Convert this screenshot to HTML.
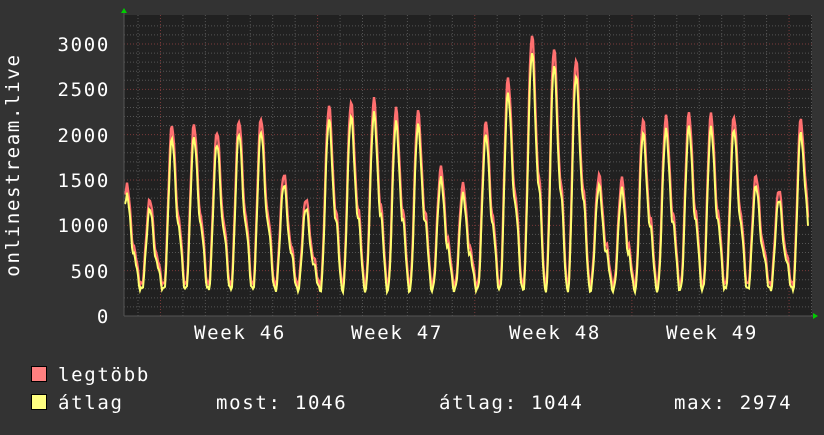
<!DOCTYPE html>
<html><head><meta charset="utf-8"><style>
html,body{margin:0;padding:0;background:#333;}
body{width:824px;height:430px;overflow:hidden;}
svg text{font-family:"DejaVu Sans Mono","Liberation Mono",monospace;fill:#fff;letter-spacing:1.7px;}
</style></head><body>
<svg id="g" width="824" height="430" xmlns="http://www.w3.org/2000/svg">
<rect width="824" height="430" fill="#333"/>
<rect x="124" y="15" width="688" height="301" fill="#212121"/>
<g id="grid"></g>
<g id="data"></g>
<line x1="124" y1="316" x2="816" y2="316" stroke="#555" stroke-width="1"/>
<line x1="124" y1="12" x2="124" y2="316" stroke="#555" stroke-width="1"/>
<polygon points="121,13 127,13 124,8" fill="#0c0"/>
<polygon points="813,313 813,319 818,316" fill="#0c0"/>
<g font-size="19" text-anchor="end">
<text x="110" y="323">0</text>
<text x="110" y="278">500</text>
<text x="110" y="232">1000</text>
<text x="110" y="187">1500</text>
<text x="110" y="142">2000</text>
<text x="110" y="96">2500</text>
<text x="110" y="51">3000</text>
</g>
<text transform="translate(19,165) rotate(-90)" font-size="19" text-anchor="middle">onlinestream.live</text>
<g font-size="19" text-anchor="middle">
<text x="240" y="339">Week 46</text>
<text x="397" y="339">Week 47</text>
<text x="555" y="339">Week 48</text>
<text x="712" y="339">Week 49</text>
</g>
<rect x="31.5" y="366.5" width="15" height="15" fill="#ff8080" stroke="#000"/>
<rect x="31.5" y="394.5" width="15" height="15" fill="#ffff80" stroke="#000"/>
<g font-size="19">
<text x="58" y="381">legtöbb</text>
<text x="58" y="409">átlag</text>
<text x="216" y="409">most: 1046</text>
<text x="439" y="409">átlag: 1044</text>
<text x="674" y="409">max: 2974</text>
</g>
</svg>
<script>
var NS="http://www.w3.org/2000/svg";
function el(p,t,a){var e=document.createElementNS(NS,t);for(var k in a)e.setAttribute(k,a[k]);p.appendChild(e);return e;}
var grid=document.getElementById('grid');
function Y(v){return 316-v*272/3000;}
for(var v=100;v<=3200;v+=100){var y=Y(v);if(y<15)break;
 el(grid,'line',{x1:124,x2:812,y1:y,y2:y,stroke:(v%500==0)?'#7a3a3a':'#555','stroke-dasharray':'1,2','stroke-width':1});}
for(var x=138;x<812;x+=22.45){var major=false;
 [160,318,475,632,790].forEach(function(w){if(Math.abs(w-x)<3)major=true;});
 el(grid,'line',{x1:x,x2:x,y1:15,y2:316,stroke:major?'#7a3a3a':'#555','stroke-dasharray':'1,2','stroke-width':1});}
var peaks=[[127,1380],[150,1220],[172,2020],[194,2030],[217,1960],[239,2080],[261,2100],[284,1500],[306,1230],[329,2230],[351,2270],[374,2300],[396,2200],[418,2170],[441,1560],[463,1380],[486,2060],[508,2530],[532,3000],[554,2860],[576,2740],[599,1480],[622,1440],[643,2080],[666,2110],[689,2150],[711,2140],[734,2120],[756,1480],[779,1330],[801,2120]];
function ease(s){return 0.5-0.5*Math.cos(Math.PI*s);}
function val(x){
 for(var i=0;i<peaks.length-1;i++){
  var a=peaks[i],b=peaks[i+1];
  if(x>=a[0]&&x<=b[0]){
   var d=b[0]-a[0],t=(x-a[0])/d;
   var tr=300;
   if(t<0.3){return a[1]-(a[1]-0.5*a[1])*ease(t/0.3);}
   if(t<0.6){var s=(t-0.3)/0.3;var m=0.5*a[1];return m-(m-tr)*ease(s);}
   if(t<0.64)return tr;
   var s=(t-0.64)/0.36;return tr+(b[1]-tr)*ease(s);
  }
 }
 if(x<peaks[0][0])return 1300;
 var L=peaks[peaks.length-1];var t=(x-L[0])/7;return L[1]-(L[1]-1046)*Math.min(1,t);
}
var dg=document.getElementById('data');
var pm="",pa="";
for(var x=125;x<=808;x+=1){
 var v=val(x);var n=Math.sin(x*1.7)*30;
 pm+=(x==125?"M":"L")+x+","+Y(v*1.02+40+n).toFixed(1);
 pa+=(x==125?"M":"L")+x+","+Y(v*0.97+n).toFixed(1);
}
el(dg,'path',{d:pm,fill:'none',stroke:'#ff7070','stroke-width':2.4});
el(dg,'path',{d:pa,fill:'none',stroke:'#ffff70','stroke-width':2});
</script>
</body></html>
